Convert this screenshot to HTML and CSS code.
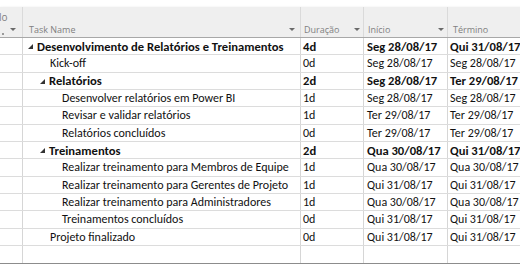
FILE: index.html
```html
<!DOCTYPE html>
<html lang="pt">
  <head>
    <meta charset="UTF-8" />
    <title>Cronograma</title>
    <link rel="stylesheet" href="styles.css">
  </head>
  <body>
    <div class="sheet">
      <!-- cabeçalho -->
      <div class="row head">
        <div class="cell c0"><span class="mode">lo</span><span class="tick"></span><span class="arrow"></span></div>
        <div class="cell c1">Task Name<span class="arrow"></span></div>
        <div class="cell c2">Duração<span class="arrow"></span></div>
        <div class="cell c3">Início<span class="arrow"></span></div>
        <div class="cell c4">Término<span class="arrow"></span></div>
      </div>

      <div class="row bold">
        <div class="cell c0"></div>
        <div class="cell c1 lv1"><svg class="tri" width="5" height="5" viewBox="0 0 5 5"><polygon points="5,0 5,5 0,5" /></svg>Desenvolvimento de Relatórios e Treinamentos</div>
        <div class="cell c2">4d</div>
        <div class="cell c3">Seg 28/08/17</div>
        <div class="cell c4">Qui 31/08/17</div>
      </div>
      <div class="row">
        <div class="cell c0"></div>
        <div class="cell c1 lv2">Kick-off</div>
        <div class="cell c2">0d</div>
        <div class="cell c3">Seg 28/08/17</div>
        <div class="cell c4">Seg 28/08/17</div>
      </div>
      <div class="row bold">
        <div class="cell c0"></div>
        <div class="cell c1 lv2s"><svg class="tri" width="5" height="5" viewBox="0 0 5 5"><polygon points="5,0 5,5 0,5" /></svg>Relatórios</div>
        <div class="cell c2">2d</div>
        <div class="cell c3">Seg 28/08/17</div>
        <div class="cell c4">Ter 29/08/17</div>
      </div>
      <div class="row">
        <div class="cell c0"></div>
        <div class="cell c1 lv3">Desenvolver relatórios em Power BI</div>
        <div class="cell c2">1d</div>
        <div class="cell c3">Seg 28/08/17</div>
        <div class="cell c4">Seg 28/08/17</div>
      </div>
      <div class="row">
        <div class="cell c0"></div>
        <div class="cell c1 lv3">Revisar e validar relatórios</div>
        <div class="cell c2">1d</div>
        <div class="cell c3">Ter 29/08/17</div>
        <div class="cell c4">Ter 29/08/17</div>
      </div>
      <div class="row">
        <div class="cell c0"></div>
        <div class="cell c1 lv3">Relatórios concluídos</div>
        <div class="cell c2">0d</div>
        <div class="cell c3">Ter 29/08/17</div>
        <div class="cell c4">Ter 29/08/17</div>
      </div>
      <div class="row bold">
        <div class="cell c0"></div>
        <div class="cell c1 lv2s"><svg class="tri" width="5" height="5" viewBox="0 0 5 5"><polygon points="5,0 5,5 0,5" /></svg>Treinamentos</div>
        <div class="cell c2">2d</div>
        <div class="cell c3">Qua 30/08/17</div>
        <div class="cell c4">Qui 31/08/17</div>
      </div>
      <div class="row">
        <div class="cell c0"></div>
        <div class="cell c1 lv3">Realizar treinamento para Membros de Equipe</div>
        <div class="cell c2">1d</div>
        <div class="cell c3">Qua 30/08/17</div>
        <div class="cell c4">Qua 30/08/17</div>
      </div>
      <div class="row">
        <div class="cell c0"></div>
        <div class="cell c1 lv3">Realizar treinamento para Gerentes de Projeto</div>
        <div class="cell c2">1d</div>
        <div class="cell c3">Qui 31/08/17</div>
        <div class="cell c4">Qui 31/08/17</div>
      </div>
      <div class="row">
        <div class="cell c0"></div>
        <div class="cell c1 lv3">Realizar treinamento para Administradores</div>
        <div class="cell c2">1d</div>
        <div class="cell c3">Qua 30/08/17</div>
        <div class="cell c4">Qua 30/08/17</div>
      </div>
      <div class="row">
        <div class="cell c0"></div>
        <div class="cell c1 lv3">Treinamentos concluídos</div>
        <div class="cell c2">0d</div>
        <div class="cell c3">Qui 31/08/17</div>
        <div class="cell c4">Qui 31/08/17</div>
      </div>
      <div class="row">
        <div class="cell c0"></div>
        <div class="cell c1 lv2">Projeto finalizado</div>
        <div class="cell c2">0d</div>
        <div class="cell c3">Qui 31/08/17</div>
        <div class="cell c4">Qui 31/08/17</div>
      </div>
      <div class="row last">
        <div class="cell c0"></div>
        <div class="cell c1"></div>
        <div class="cell c2"></div>
        <div class="cell c3"></div>
        <div class="cell c4"></div>
      </div>
    </div>
  </body>
</html>
```

FILE: styles.css
```css
body {
  margin: 0;
  background-color: white;
  overflow: hidden;
}

.sheet {
  margin-top: 7px;
  width: 560px;
  font-family: Carlito, Lato, sans-serif;
  font-size: 12px;
  color: #111;
  border-bottom: 1px solid #8c8c8c;
  box-shadow: 0 2px 3px rgba(0, 0, 0, 0.45);
}

.row {
  display: flex;
  height: 17.33px;
  border-bottom: 1px solid #dcdcdc;
  box-sizing: border-box;
}

.row.last {
  border-bottom: none;
}

.cell {
  box-sizing: border-box;
  border-right: 1px solid #d6d6d6;
  display: flex;
  align-items: center;
  white-space: nowrap;
  overflow: hidden;
  position: relative;
}

.c0 { width: 23px; }
.c1 { width: 278px; }
.c2 { width: 63px; padding-left: 2px; }
.c3 { width: 84px; padding-left: 3px; }
.c4 { flex: 1; padding-left: 2px; }

.bold {
  font-weight: bold;
  font-size: 12.6px;
}

.lv1 { padding-left: 5px; }
.lv2 { padding-left: 27px; }
.lv2s { padding-left: 17px; }
.lv3 { padding-left: 39px; }

.tri {
  fill: #333;
  margin-right: 4px;
  margin-top: 1px;
}

/* cabeçalho */
.row.head {
  height: 31px;
  background-color: #efefef;
  border-bottom: 1px solid #a8a8a8;
  color: #7f7f7f;
  font-family: "Open Sans", sans-serif;
  font-size: 9px;
  font-weight: normal;
}

.head .cell {
  align-items: flex-end;
  padding-bottom: 1px;
  border-right: 1px solid #dadada;
}

.head .c1 { padding-left: 6px; }
.head .c2 { padding-left: 3px; }
.head .c3 { padding-left: 4px; }
.head .c4 { padding-left: 5px; }

.head .arrow {
  position: absolute;
  bottom: 6px;
  right: 3px;
  width: 0;
  height: 0;
  border-left: 3px solid transparent;
  border-right: 3px solid transparent;
  border-top: 3px solid #6a6a6a;
}

.head .c1 .arrow { right: 5px; }
.head .c4 .arrow { right: auto; left: 73px; }

.head .c0 .arrow { right: 6px; }

.mode {
  position: absolute;
  top: 3px;
  left: -1px;
  font-size: 10px;
}

.tick {
  position: absolute;
  bottom: 2px;
  left: 2px;
  width: 2px;
  height: 2px;
  background-color: #9a9a9a;
}
```
